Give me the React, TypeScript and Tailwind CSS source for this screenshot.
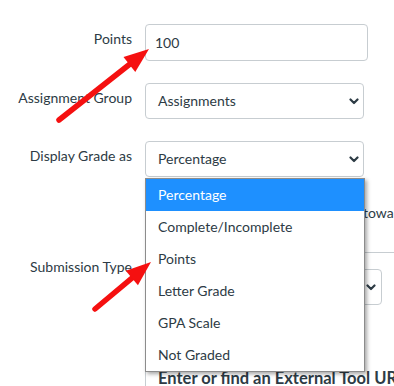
import React from "react";

const options = ["Percentage", "Complete/Incomplete", "Points", "Letter Grade", "GPA Scale", "Not Graded"];

function Chevron() {
    return (
        <svg width="10" height="7" viewBox="0 0 10 7" className="shrink-0">
            <polyline points="1.5,1.5 5,5 8.5,1.5" fill="none" stroke="#2d3b45" strokeWidth="2.2" strokeLinecap="round" strokeLinejoin="round" />
        </svg>
    );
}

function Select({ value, className }: { value: string; className: string }) {
    return (
        <div className={`flex items-center justify-between h-[36px] border border-[#c7cdd1] rounded-[4px] bg-white pl-[12px] pr-[4px] ${className}`}>
            <span>{value}</span>
            <Chevron />
        </div>
    );
}

function Arrow({ x1, y1, x2, y2 }: { x1: number; y1: number; x2: number; y2: number }) {
    const dx = x2 - x1;
    const dy = y2 - y1;
    const len = Math.hypot(dx, dy);
    const ux = dx / len;
    const uy = dy / len;
    const head = 25;
    const half = 9.5;
    const bx = x2 - ux * head;
    const by = y2 - uy * head;
    const nx = -uy;
    const ny = ux;
    const pts = `${x2},${y2} ${bx + nx * half},${by + ny * half} ${bx - nx * half},${by - ny * half}`;
    return (
        <g>
            <line x1={x1} y1={y1} x2={bx + ux * 2} y2={by + uy * 2} stroke="#f51010" strokeWidth="5.5" strokeLinecap="round" />
            <polygon points={pts} fill="#f51010" />
        </g>
    );
}

export default function App() {
    return (
        <div className="relative w-[394px] h-[386px] overflow-hidden bg-white text-[#2d3b45] text-[14px] leading-[20px]" style={{ fontFamily: "Lato, 'Liberation Sans', sans-serif" }}>
            <div className="grid grid-cols-[132px_1fr] gap-x-[13px] pt-[24px]">
                <label className="text-right pt-[5px]">Points</label>
                <div className="h-[37px] w-[223px] border border-[#c7cdd1] rounded-[4px] flex items-center pl-[9px]">100</div>

                <label className="text-right pt-[5px] mt-[22px]">Assignment Group</label>
                <Select value="Assignments" className="w-[219px] mt-[22px]" />

                <label className="text-right pt-[5px] mt-[22px]">Display Grade as</label>
                <Select value="Percentage" className="w-[219px] mt-[22px]" />

                <div />
                <div className="flex items-center gap-2 whitespace-nowrap mt-[26px] h-[20px]">
                    <span className="w-[14px] h-[14px] border border-[#8a8a8a] rounded-[2px] shrink-0" />
                    <span className="w-[188px] shrink-0">Do not count this</span>
                    <span>towards the final grade</span>
                </div>

                <label className="text-right pt-[5px] mt-[29px]">Submission Type</label>
                <div className="mt-[29px] w-[260px] border-t border-l border-[#c7cdd1] pt-[16px] pl-[12px]">
                    <Select value="External Tool" className="w-[224px] pr-[5px]" />
                    <div className="h-[180px] pt-[63px]">
                        <div className="font-bold text-[16.5px] whitespace-nowrap">Enter or find an External Tool URL</div>
                    </div>
                </div>
            </div>

            <div className="absolute left-[145px] top-[178px] w-[220px] bg-white border border-[#8c8c8c] shadow-[2px_2px_4px_rgba(0,0,0,0.35)]">
                {options.map((o, i) => (
                    <div key={o} className={`h-[32px] flex items-center pl-[12px] ${i === 0 ? "bg-[#1e90ff] text-white" : ""}`}>{o}</div>
                ))}
            </div>

            <svg className="absolute inset-0 pointer-events-none" width="394" height="386">
                <Arrow x1={59} y1={120} x2={149} y2={49} />
                <Arrow x1={95} y1={309} x2={151} y2={262} />
            </svg>
        </div>
    );
}
